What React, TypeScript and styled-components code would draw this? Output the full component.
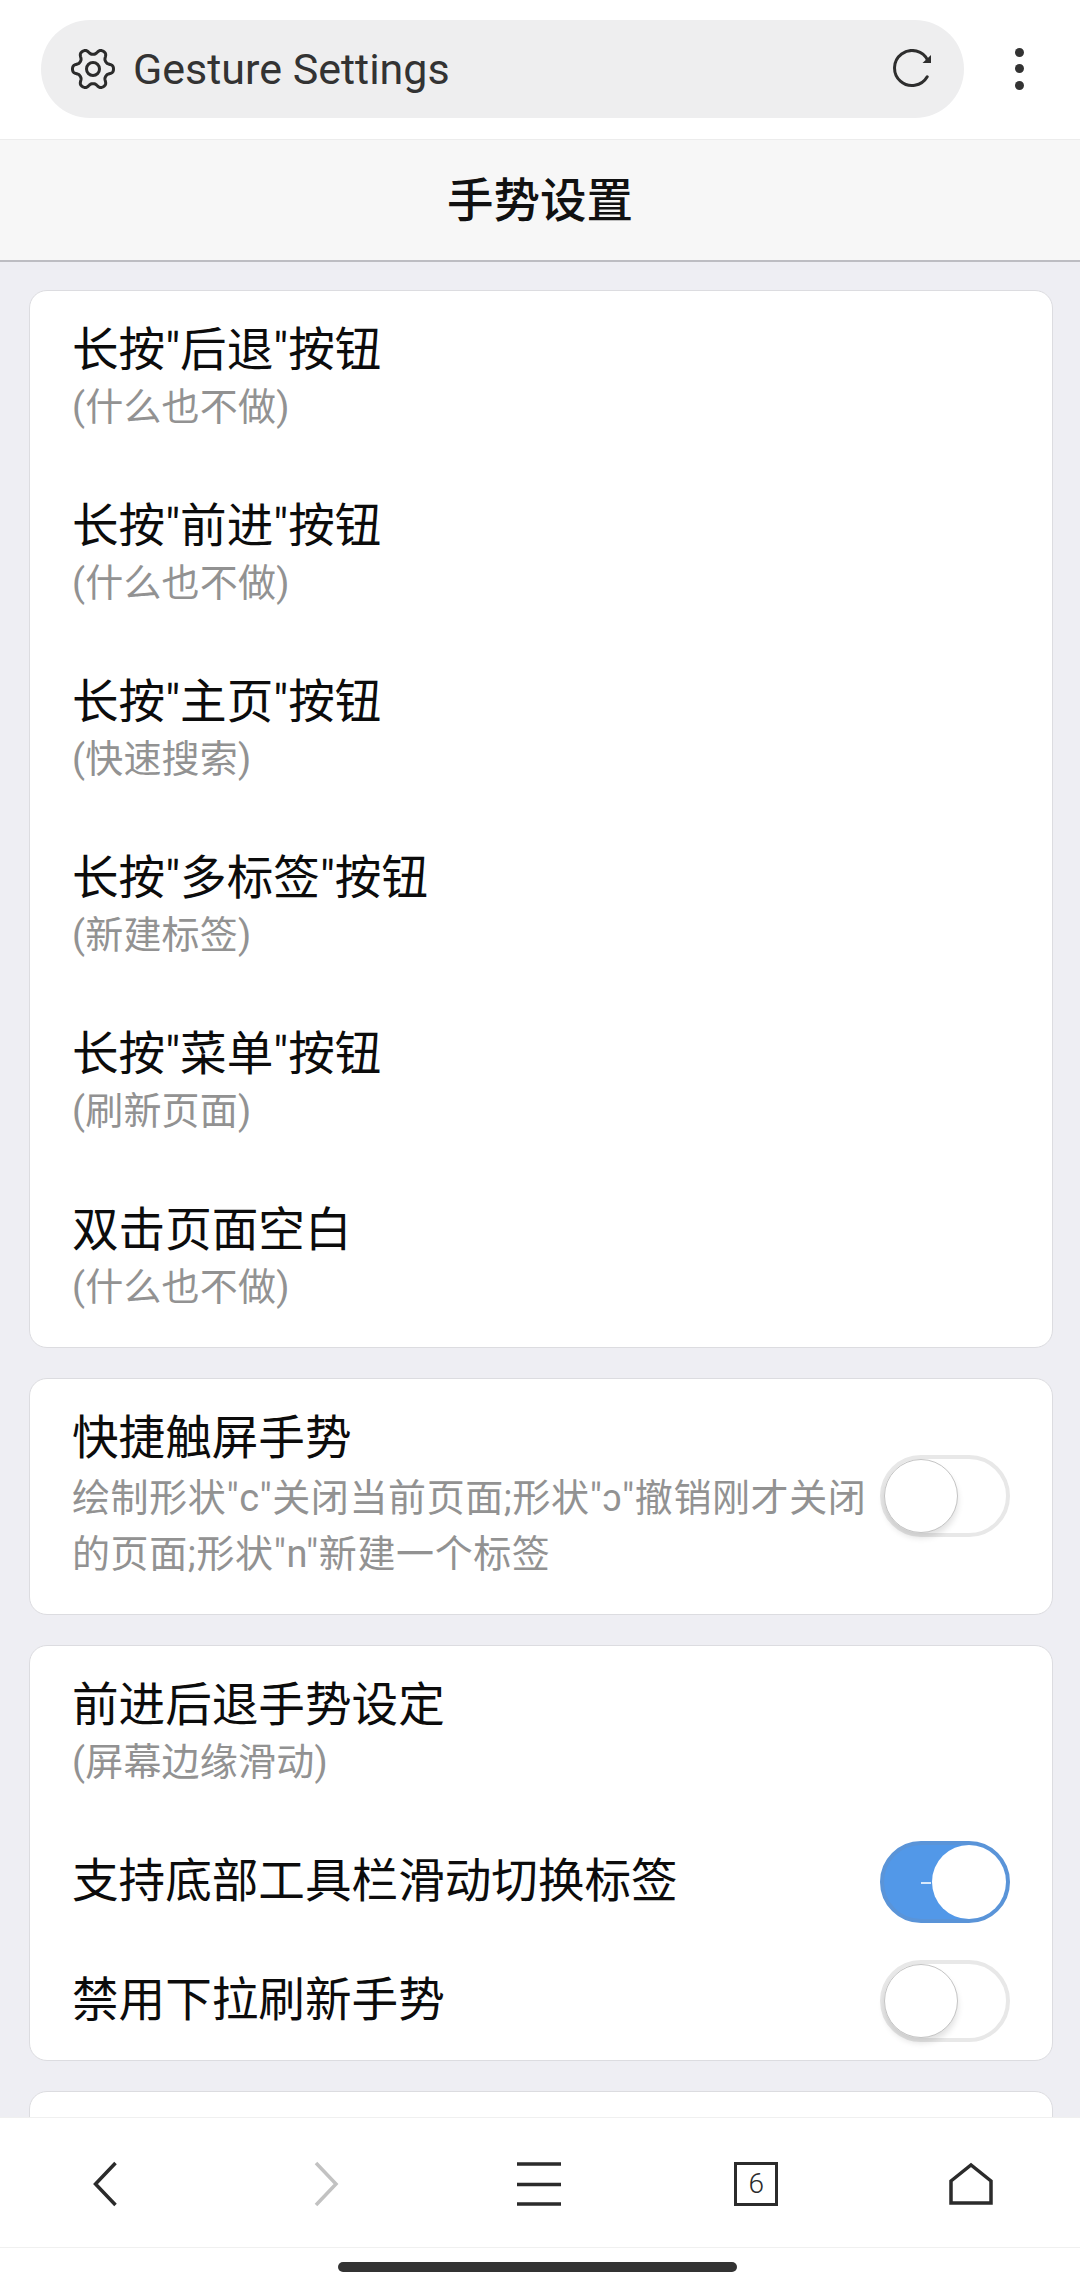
import { FC } from "react";
import styled, { createGlobalStyle } from "styled-components";

const GlobalStyle = createGlobalStyle`
  html, body {
    margin: 0;
    padding: 0;
    background: #fff;
  }
  * {
    box-sizing: border-box;
  }
`;

const FONT = `Roboto, "Noto Sans CJK SC", sans-serif`;

interface RowData {
  title: string;
  sub: string;
}

const longPress: RowData[] = [
  { title: '长按"后退"按钮', sub: "(什么也不做)" },
  { title: '长按"前进"按钮', sub: "(什么也不做)" },
  { title: '长按"主页"按钮', sub: "(快速搜索)" },
  { title: '长按"多标签"按钮', sub: "(新建标签)" },
  { title: '长按"菜单"按钮', sub: "(刷新页面)" },
  { title: "双击页面空白", sub: "(什么也不做)" },
];

// gear outline: six wide teeth, two on top, two below, one each side
const gearPath = (() => {
  const pts: string[] = [];
  for (let i = 0; i < 144; i++) {
    const a = (i / 144) * Math.PI * 2;
    const tooth = Math.tanh(1.5 * Math.cos(6 * a)) / Math.tanh(1.5);
    const r = 17.6 + 2.9 * tooth;
    pts.push(`${(22 + r * Math.cos(a)).toFixed(2)} ${(21 + r * Math.sin(a)).toFixed(2)}`);
  }
  return `M${pts.join("L")}Z`;
})();

const ToggleSwitch: FC<{ on?: boolean }> = ({ on }) => (
  <Track $on={on}>
    {on && <Tick />}
    <Knob $on={on} />
  </Track>
);

const App: FC = () => {
  return (
    <Page>
      <GlobalStyle />
      <TopBar>
        <AddressBar>
          <GearIcon viewBox="0 0 44 42">
            <path d={gearPath} />
            <circle cx="22" cy="21" r="6.500" />
          </GearIcon>
          <AddressText>Gesture Settings</AddressText>
          <ReloadIcon viewBox="0 0 40 40">
            <path d="M34.900 11.600A17.500 17.500 0 1 0 34.200 27.750" />
            <path d="M38 14H29.500L38 6z" fill="#2e2e2e" stroke="none" />
          </ReloadIcon>
        </AddressBar>
        <MoreDots>
          <span />
          <span />
          <span />
        </MoreDots>
      </TopBar>

      <Header>手势设置</Header>

      <Content>
        <Card>
          {longPress.map((r) => (
            <TextRow key={r.title}>
              <Title>{r.title}</Title>
              <Sub>{r.sub}</Sub>
            </TextRow>
          ))}
        </Card>

        <Card>
          <WrapRow>
            <WrapText>
              <Title>快捷触屏手势</Title>
              <WrapSub>绘制形状"c"关闭当前页面;形状"ɔ"撤销刚才关闭的页面;形状"n"新建一个标签</WrapSub>
            </WrapText>
            <ToggleSwitch />
          </WrapRow>
        </Card>

        <Card>
          <TextRow>
            <Title>前进后退手势设定</Title>
            <Sub>(屏幕边缘滑动)</Sub>
          </TextRow>
          <SwitchRow>
            <SwitchTitle>支持底部工具栏滑动切换标签</SwitchTitle>
            <ToggleSwitch on />
          </SwitchRow>
          <SwitchRow>
            <SwitchTitle>禁用下拉刷新手势</SwitchTitle>
            <ToggleSwitch />
          </SwitchRow>
        </Card>

        <Card $clipped />
      </Content>

      <BottomBar>
        <NavIcon viewBox="0 0 44 44">
          <path d="M21 1 1 22l20 21" transform="translate(8.500 0)" />
        </NavIcon>
        <NavIcon viewBox="0 0 44 44" $muted>
          <path d="M1 1l20 21L1 43" transform="translate(13 0)" />
        </NavIcon>
        <NavIcon viewBox="0 0 44 44">
          <path d="M0 2h44M0 22.500h44M0 42h44" />
        </NavIcon>
        <TabsBadge>6</TabsBadge>
        <NavIcon viewBox="0 0 44 44">
          <path d="M2 41V19L22 3l20 16v22z" />
        </NavIcon>
      </BottomBar>

      <HomeArea>
        <HomeIndicator />
      </HomeArea>
    </Page>
  );
};

export default App;

const Page = styled.div`
  width: 1080px;
  height: 2293px;
  display: flex;
  flex-direction: column;
  overflow: hidden;
  background: #fff;
  font-family: ${FONT};
`;

const TopBar = styled.div`
  height: 139px;
  flex: none;
  display: flex;
  align-items: center;
  padding: 0 0 2px 41px;
  background: #fff;
`;

const AddressBar = styled.div`
  width: 923px;
  height: 98px;
  border-radius: 49px;
  background: #eeeeef;
  display: flex;
  align-items: center;
  padding: 0 31px 0 30px;
`;

const GearIcon = styled.svg`
  flex: none;
  width: 44px;
  height: 42px;
  overflow: visible;
  fill: none;
  stroke: #2b2b2b;
  stroke-width: 3;
  stroke-linejoin: round;
`;

const AddressText = styled.div`
  flex: 1;
  margin-left: 18px;
  font-size: 43px;
  line-height: 50px;
  color: #333;
`;

const ReloadIcon = styled.svg`
  flex: none;
  width: 40px;
  height: 40px;
  fill: none;
  stroke: #2e2e2e;
  stroke-width: 3;
  stroke-linecap: round;
`;

const MoreDots = styled.div`
  margin-left: 51px;
  display: flex;
  flex-direction: column;
  gap: 7.5px;

  span {
    display: block;
    width: 9px;
    height: 9px;
    border-radius: 50%;
    background: #333;
  }
`;

const Header = styled.div`
  height: 123px;
  flex: none;
  display: flex;
  align-items: center;
  justify-content: center;
  padding-bottom: 7px;
  background: #f7f7f7;
  border-top: 1px solid #ececec;
  border-bottom: 2px solid #bdbdc2;
  font-size: 46.5px;
  font-weight: 500;
  color: #111;
`;

const Content = styled.div`
  flex: 1;
  min-height: 0;
  overflow: hidden;
  background: #eeeef3;
  padding: 28px 27px 0 29px;
  display: flex;
  flex-direction: column;
  gap: 30px;
`;

const Card = styled.div<{ $clipped?: boolean }>`
  flex: none;
  background: #fff;
  border: 1px solid #dcdce0;
  border-radius: 18px;
  ${(p) => (p.$clipped ? "height: 200px;" : "")}
`;

const TextRow = styled.div`
  height: 176px;
  padding: 30px 43px 0 42px;
`;

const WrapRow = styled.div`
  display: flex;
  align-items: center;
  padding: 30px 42px 32px 42px;
`;

const WrapText = styled.div`
  flex: 1;
  min-width: 0;
  padding-right: 10px;
`;

const SwitchRow = styled.div`
  height: 119px;
  display: flex;
  align-items: center;
  justify-content: space-between;
  padding: 0 42px 0 42px;
`;

const Title = styled.div`
  font-size: 46.6px;
  line-height: 58px;
  color: #0c0c0c;
`;

const SwitchTitle = styled(Title)`
  margin-bottom: 1px;
`;

const Sub = styled.div`
  font-size: 38px;
  line-height: 56px;
  letter-spacing: 0.2px;
  color: #929292;
`;

const WrapSub = styled(Sub)`
  margin-top: 3px;
  letter-spacing: 0.6px;
`;

const Track = styled.div<{ $on?: boolean }>`
  position: relative;
  flex: none;
  width: 130px;
  height: 82px;
  border-radius: 41px;
  background: ${(p) => (p.$on ? "#5298e8" : "#fff")};
  border: 4px solid ${(p) => (p.$on ? "#5a94d8" : "#e8e8e8")};
`;

const Knob = styled.div<{ $on?: boolean }>`
  position: absolute;
  top: 0;
  left: ${(p) => (p.$on ? "48px" : "0")};
  width: 74px;
  height: 74px;
  border-radius: 50%;
  background: #fff;
  border: ${(p) => (p.$on ? "none" : "1px solid #c4c4c4")};
  box-shadow: ${(p) => (p.$on ? "none" : "0 5px 6px rgba(0, 0, 0, 0.12)")};
`;

const Tick = styled.div`
  position: absolute;
  top: 37px;
  left: 37px;
  width: 10px;
  height: 2px;
  background: #d8e9fb;
`;

const BottomBar = styled.div`
  height: 131px;
  flex: none;
  display: grid;
  grid-template-columns: repeat(5, 1fr);
  justify-items: center;
  align-items: center;
  background: #fff;
  border-top: 1px solid #f0f0f0;
  border-bottom: 1px solid #f0f0f0;
  padding: 2px 1px 0 0;
`;

const NavIcon = styled.svg<{ $muted?: boolean }>`
  width: 44px;
  height: 44px;
  overflow: visible;
  fill: none;
  stroke: ${(p) => (p.$muted ? "#c2c2c2" : "#2b2b2b")};
  stroke-width: 3.5;
`;

const TabsBadge = styled.div`
  width: 44px;
  height: 44px;
  margin-left: 2px;
  display: flex;
  align-items: center;
  justify-content: center;
  border: 3px solid #2b2b2b;
  font-size: 28px;
  font-weight: 300;
  color: #2b2b2b;
`;

const HomeArea = styled.div`
  height: 45px;
  flex: none;
  display: flex;
  justify-content: center;
  padding: 14px 5px 0 0;
  background: #fff;
`;

const HomeIndicator = styled.div`
  width: 399px;
  height: 10px;
  border-radius: 5px;
  background: #333;
`;
